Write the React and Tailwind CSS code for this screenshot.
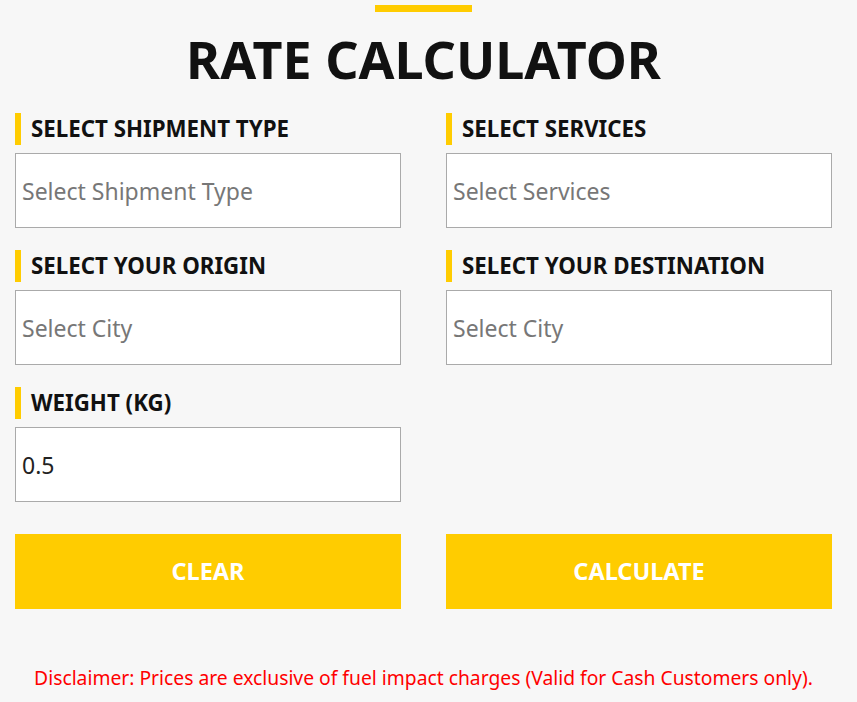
export default function App() {
  const font = { fontFamily: '"Noto Sans", "Open Sans", sans-serif' };
  const Label = ({ children }) => (
    <div className="flex items-center h-[32px] border-l-[6px] border-[#ffcc00] pl-[10px]">
      <span className="text-[22.3px] font-bold text-[#111] leading-none">{children}</span>
    </div>
  );
  const Field = ({ label, placeholder, value }) => (
    <div className="flex flex-col gap-[8px]">
      <Label>{label}</Label>
      <input
        readOnly
        defaultValue={value}
        placeholder={placeholder}
        className="h-[75px] w-full border border-[#aaaaaa] bg-white px-[6px] text-[23px] text-[#222] placeholder:text-[#777] outline-none"
        style={font}
      />
    </div>
  );
  return (
    <div className="min-h-[702px] bg-[#f7f7f7] pl-[15px] pr-[25px]" style={font}>
      <div className="flex flex-col items-center pt-[5px]">
        <div className="w-[97px] h-[7px] bg-[#ffcc00]" />
        <h1 className="mt-[21px] text-[52px] font-bold leading-none text-[#111]">RATE CALCULATOR</h1>
      </div>
      <div className="mt-[28px] grid grid-cols-2 gap-x-[45px] gap-y-[22px]">
        <Field label="SELECT SHIPMENT TYPE" placeholder="Select Shipment Type" />
        <Field label="SELECT SERVICES" placeholder="Select Services" />
        <Field label="SELECT YOUR ORIGIN" placeholder="Select City" />
        <Field label="SELECT YOUR DESTINATION" placeholder="Select City" />
        <Field label="WEIGHT (KG)" value="0.5" />
        <div />
      </div>
      <div className="mt-[32px] grid grid-cols-2 gap-x-[45px]">
        <button className="h-[75px] bg-[#ffcc00] text-white text-[23.5px] font-bold">CLEAR</button>
        <button className="h-[75px] bg-[#ffcc00] text-white text-[23.5px] font-bold">CALCULATE</button>
      </div>
      <p className="mt-[55px] text-center text-[19.3px] text-[#ff0000]">
        Disclaimer: Prices are exclusive of fuel impact charges (Valid for Cash Customers only).
      </p>
    </div>
  );
}
